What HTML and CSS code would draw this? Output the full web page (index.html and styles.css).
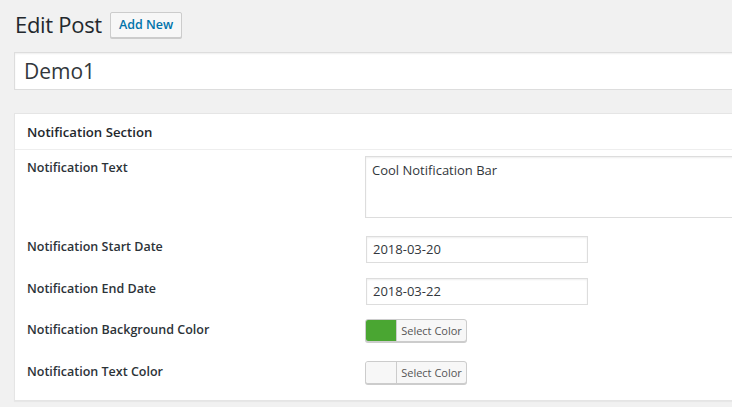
FILE: index.html
```html
<!DOCTYPE html>
<html>
<head>
<meta charset="utf-8">
<link rel="stylesheet" href="styles.css">
</head>
<body>
<div class="wrap">
  <div class="heading">
    <h1>Edit Post</h1>
    <a class="add-new">Add New</a>
  </div>
  <div class="title-input">Demo1</div>
  <div class="postbox">
    <h2 class="postbox-title">Notification Section</h2>
    <div class="fields">
      <div class="row row-text">
        <div class="label">Notification Text</div>
        <div class="textarea">Cool Notification Bar</div>
      </div>
      <div class="row row-start">
        <div class="label">Notification Start Date</div>
        <div class="input">2018-03-20</div>
      </div>
      <div class="row row-end">
        <div class="label">Notification End Date</div>
        <div class="input">2018-03-22</div>
      </div>
      <div class="row row-bg">
        <div class="label">Notification Background Color</div>
        <div class="color-btn"><span class="swatch swatch-green"></span><span class="color-label">Select Color</span></div>
      </div>
      <div class="row row-tc">
        <div class="label">Notification Text Color</div>
        <div class="color-btn"><span class="swatch"></span><span class="color-label">Select Color</span></div>
      </div>
    </div>
  </div>
</div>
</body>
</html>
```

FILE: styles.css
```css
html, body {
  margin: 0;
  padding: 0;
  background: #f1f1f1;
  overflow: hidden;
}
body {
  font-family: "Open Sans", "Noto Sans", sans-serif;
  color: #23282d;
  width: 732px;
  height: 407px;
}
.wrap {
  width: 900px;
  padding: 0 0 0 14px;
}
.heading {
  display: flex;
  align-items: center;
  height: 49px;
}
h1 {
  margin: 0 0 0 1px;
  font-size: 22px;
  font-weight: 400;
  line-height: 49px;
  letter-spacing: -0.3px;
}
.add-new {
  margin-left: 8px;
  height: 26px;
  box-sizing: border-box;
  padding: 0 8px;
  border: 1px solid #ccc;
  border-radius: 2px;
  background: #f7f7f7;
  box-shadow: 0 1px 0 #ccc;
  color: #0073aa;
  font-size: 12.5px;
  font-weight: 600;
  line-height: 24px;
}
.title-input {
  margin-top: 3px;
  height: 38px;
  box-sizing: border-box;
  border: 1px solid #ddd;
  background: #fff;
  box-shadow: inset 0 1px 2px rgba(0,0,0,.07);
  padding: 0 9px;
  font-size: 21px;
  line-height: 36px;
  color: #32373c;
}
.postbox {
  margin-top: 23px;
  background: #fff;
  border: 1px solid #e5e5e5;
  box-shadow: 0 1px 1px rgba(0,0,0,.04);
  height: 288px;
  box-sizing: border-box;
}
.postbox-title {
  margin: 0;
  height: 36px;
  box-sizing: border-box;
  border-bottom: 1px solid #eee;
  padding: 0 12px;
  font-size: 13.2px;
  font-weight: 600;
  line-height: 37px;
}
.fields {
  padding: 6px 0 0 12px;
}
.row {
  display: grid;
  grid-template-columns: 338px 1fr;
  align-items: start;
}
.label {
  font-size: 12.5px;
  font-weight: 600;
  line-height: 18px;
  color: #2c3338;
}
.row-text .label { padding-top: 3px; }
.textarea {
  height: 62px;
  box-sizing: border-box;
  border: 1px solid #ddd;
  box-shadow: inset 0 1px 2px rgba(0,0,0,.07);
  padding: 4px 6px;
  font-size: 13px;
  line-height: 18px;
  color: #32373c;
}
.row-start { margin-top: 18px; }
.row-end { margin-top: 15px; }
.row-bg { margin-top: 14px; }
.row-tc { margin-top: 19px; }
.row-start .label, .row-end .label { padding-top: 2px; }
.input {
  width: 222px;
  height: 27px;
  box-sizing: border-box;
  border: 1px solid #ddd;
  box-shadow: inset 0 1px 2px rgba(0,0,0,.07);
  padding: 0 6px;
  font-size: 13px;
  line-height: 25px;
  color: #32373c;
  margin-left: 1px;
}
.row-bg .label, .row-tc .label { padding-top: 2px; }
.color-btn {
  display: flex;
  width: 102px;
  height: 23px;
  box-sizing: border-box;
  border: 1px solid #ccc;
  border-radius: 3px;
  background: #f7f7f7;
  box-shadow: 0 1px 0 #ccc;
  overflow: hidden;
}
.swatch {
  width: 30px;
  height: 100%;
  border-right: 1px solid #ccc;
  background: #f7f7f7;
}
.swatch-green { background: #4aa632; }
.color-label {
  flex: 1;
  font-size: 11px;
  line-height: 21px;
  text-align: center;
  color: #555;
}
```
